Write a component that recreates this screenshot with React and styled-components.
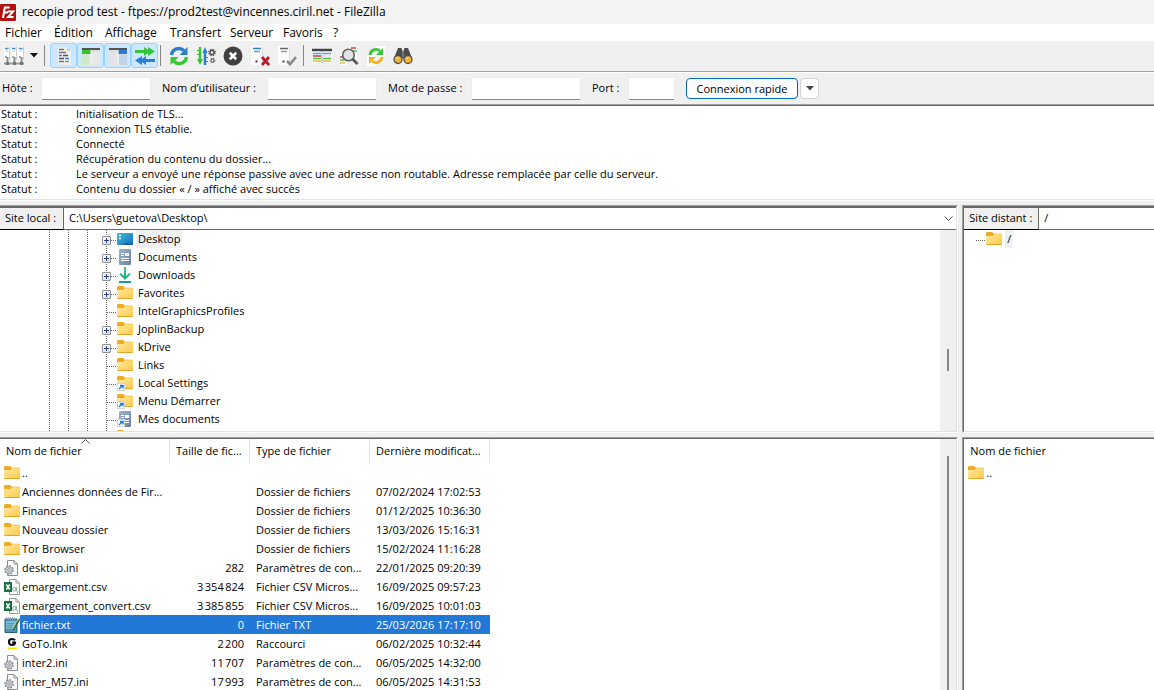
import React from 'react'
import styled, { createGlobalStyle, css } from 'styled-components'

const FACE = '#f0f0f0'
const SHADOW = '#a0a0a0'
const DARK = '#696969'
const LIGHT = '#e3e3e3'
const SELECTED = '#2178d6'

const GlobalStyle = createGlobalStyle`
  * {
    box-sizing: border-box;
  }
  body {
    margin: 0;
    overflow: hidden;
  }
  body, button, input, select {
    font-family: 'Open Sans', 'Noto Sans', sans-serif;
    font-size: 11px;
    color: #000;
  }
  svg {
    display: block;
    flex: none;
  }
`

const Window = styled('div')`
  display: flex;
  flex-direction: column;
  height: 100vh;
  background: ${FACE};
`

const TitleBar = styled('header')`
  display: flex;
  align-items: center;
  gap: 6px;
  height: 24px;
  flex: none;
  background: #f3f3f3;
`

const Title = styled('h1')`
  margin: 0;
  font-size: 12px;
  font-weight: normal;
  line-height: 16px;
  white-space: nowrap;
`

const MenuBar = styled('nav')`
  display: flex;
  height: 17px;
  flex: none;
  background: #fff;
`

const MenuButton = styled('button')`
  flex: none;
  width: ${({ $width }) => $width}px;
  padding: 0 0 0 5px;
  border: 0;
  background: none;
  font-size: 12px;
  line-height: 17px;
  text-align: left;
  white-space: nowrap;
`

const ToolBar = styled('div')`
  display: flex;
  align-items: center;
  height: 32px;
  flex: none;
  padding-bottom: 2px;
  border-bottom: 1px solid #fff;
  box-shadow: inset 0 -1px 0 ${SHADOW};
`

const ToolButton = styled('button')`
  display: flex;
  align-items: center;
  justify-content: center;
  flex: none;
  width: ${({ $narrow }) => ($narrow ? 14 : 27)}px;
  height: 25px;
  padding: 0;
  border: 1px solid transparent;
  border-radius: 3px;
  background: none;
  ${({ $pressed }) =>
    $pressed &&
    css`
      border-color: #99d1ff;
      background: #cce8ff;
    `}
`

const ToolSeparator = styled('span')`
  flex: none;
  width: 1px;
  height: 21px;
  margin: 0 ${({ $after }) => $after}px 0 ${({ $before }) => $before}px;
  background: #868686;
`

const QuickConnect = styled('form')`
  display: flex;
  align-items: center;
  gap: 11px;
  height: 31px;
  flex: none;
  padding-left: 2px;
`

const Field = styled('label')`
  display: flex;
  align-items: center;
  white-space: nowrap;
`

const FieldName = styled('span')`
  width: ${({ $width }) => $width}px;
  padding-bottom: 2px;
`

const FieldInput = styled('input')`
  width: ${({ $short }) => ($short ? 47 : 110)}px;
  height: 23px;
  padding: 0 4px;
  border: 1px solid #ececec;
  border-bottom-color: #868686;
  border-radius: 2px;
  background: #fff;
`

const ConnectGroup = styled('div')`
  display: flex;
  gap: 2px;
`

const ConnectButton = styled('button')`
  width: 112px;
  height: 21px;
  padding: 0;
  border: 1px solid #0067c0;
  border-radius: 4px;
  background: #fdfdfd;
  white-space: nowrap;
`

const HistoryButton = styled('button')`
  display: flex;
  align-items: center;
  justify-content: center;
  width: 19px;
  height: 21px;
  padding: 0;
  border: 1px solid #d0d0d0;
  border-radius: 4px;
  background: #fdfdfd;
`

const Log = styled('ul')`
  flex: none;
  margin: 0 0 4px;
  padding: 1px 0 4px;
  border-top: 1px solid ${SHADOW};
  border-bottom: 1px solid #fff;
  background: #fff;
  box-shadow: inset 0 1px 0 ${DARK}, inset 0 -1px 0 ${LIGHT};
  list-style: none;
`

const LogLine = styled('li')`
  display: flex;
  line-height: 15px;
  white-space: nowrap;
`

const LogKind = styled('span')`
  width: 76px;
  padding-left: 1px;
`

const Panes = styled('main')`
  display: grid;
  grid-template-columns: minmax(0, 5fr) minmax(0, 1fr);
  grid-template-rows: 228px minmax(0, 1fr);
  gap: 4px;
  flex: 1;
  min-height: 0;
`

const Pane = styled('section')`
  display: flex;
  flex-direction: column;
  min-width: 0;
  min-height: 0;
  overflow: hidden;
  border-top: 1px solid ${SHADOW};
  background: #fff;
  ${({ $remote }) =>
    $remote
      ? css`
          border-left: 1px solid ${SHADOW};
        `
      : css`
          border-right: 1px solid #fff;
        `}
  ${({ $open }) =>
    !$open &&
    css`
      border-bottom: 1px solid #fff;
    `}
`

const PaneInner = styled('div')`
  display: flex;
  flex-direction: column;
  flex: 1;
  min-height: 0;
  border-top: 1px solid ${DARK};
  ${({ $remote }) =>
    $remote
      ? css`
          border-left: 1px solid ${DARK};
        `
      : css`
          border-right: 1px solid ${LIGHT};
        `}
  ${({ $open }) =>
    !$open &&
    css`
      border-bottom: 1px solid ${LIGHT};
    `}
`

const PathBar = styled('div')`
  display: flex;
  height: 23px;
  flex: none;
  border-top: 1px solid ${DARK};
`

const PathLabel = styled('label')`
  flex: none;
  width: ${({ $width }) => $width}px;
  padding-left: 5px;
  border-right: 1px solid ${DARK};
  border-bottom: 1px solid #000;
  background: ${FACE};
  line-height: 20px;
  white-space: nowrap;
`

const PathBox = styled('div')`
  display: grid;
  grid-template-columns: minmax(0, 1fr) 12px;
  align-items: center;
  flex: 1;
  min-width: 0;
  border-bottom: 1px solid ${DARK};
`

const PathSelect = styled('select')`
  grid-area: 1 / 1 / 2 / 3;
  width: 100%;
  height: 20px;
  padding: 0 0 2px 5px;
  border: 0;
  appearance: none;
  background: none;
`

const PathChevron = styled('svg')`
  grid-area: 1 / 2;
  pointer-events: none;
`

const Scrollable = styled('div')`
  display: flex;
  flex: 1;
  min-height: 0;
`

const ScrollTrack = styled('div')`
  display: flex;
  justify-content: center;
  flex: none;
  width: 16px;
  padding-top: ${({ $top }) => $top}px;
  background: ${FACE};
`

const ScrollThumb = styled('div')`
  width: 2px;
  height: ${({ $height }) => $height};
  background: #868686;
`

const Tree = styled('ul')`
  flex: 1;
  min-width: 0;
  margin: 0;
  padding: 0 0 0 ${({ $indent }) => $indent}px;
  overflow: hidden;
  list-style: none;
`

const TreeRow = styled('li')`
  display: flex;
  align-items: center;
  height: 18px;
`

const Guide = styled('span')`
  flex: none;
  width: ${({ $last }) => ($last ? 15 : 19)}px;
  height: 18px;
  background: repeating-linear-gradient(${DARK} 0 1px, transparent 1px 2px) left / 1px 18px no-repeat;
`

const Branch = styled('span')`
  flex: none;
  width: 15px;
  height: 18px;
  padding-top: 6px;
  background: repeating-linear-gradient(90deg, ${DARK} 0 1px, transparent 1px 2px) 5px 10px / 10px 1px no-repeat
    ${({ $root }) =>
      !$root && `, repeating-linear-gradient(${DARK} 0 1px, transparent 1px 2px) 4px 0 / 1px 18px no-repeat`};
`

const Expander = styled('button')`
  display: block;
  width: 9px;
  height: 9px;
  padding: 0;
  border: 1px solid #919191;
  border-radius: 1px;
  background: linear-gradient(#27408b, #27408b) center / 5px 1px no-repeat,
    linear-gradient(#27408b, #27408b) center / 1px 5px no-repeat, linear-gradient(135deg, #fff, #dcdcdc);
`

const TreeName = styled('span')`
  margin-left: 3px;
  padding: 0 2px;
  line-height: 18px;
  white-space: nowrap;
  ${({ $current }) => $current && `background: ${FACE};`}
`

const ListArea = styled('div')`
  flex: 1;
  min-width: 0;
  overflow: hidden;
`

const FileTable = styled('table')`
  width: ${({ $width }) => $width};
  border-collapse: collapse;
  table-layout: fixed;
`

const HeadCell = styled('th')`
  position: relative;
  width: ${({ $width }) => ($width ? `${$width}px` : 'auto')};
  height: 24px;
  padding: 0 0 2px 6px;
  overflow: hidden;
  font-weight: normal;
  text-align: left;
  white-space: nowrap;
  ${({ $line }) => $line && `box-shadow: inset -1px 0 0 ${LIGHT};`}
`

const SortMark = styled('svg')`
  position: absolute;
  top: 0;
  left: 0;
  right: 0;
  margin: 0 auto;
`

const FileRow = styled('tr')`
  height: 19px;
  line-height: 19px;
  ${({ $selected }) => $selected && 'color: #fff;'}
`

const Cell = styled('td')`
  padding: 0 6px;
  overflow: hidden;
  text-align: ${({ $right }) => ($right ? 'right' : 'left')};
  white-space: nowrap;
  ${({ $selected }) => $selected && `background: ${SELECTED};`}
`

const NameCell = styled('td')`
  padding: 0 0 0 4px;
`

const NameLine = styled('div')`
  display: flex;
  align-items: center;
  height: 19px;
`

const FileName = styled('span')`
  flex: 1;
  padding-left: 2px;
  white-space: nowrap;
  ${({ $selected }) => $selected && `background: ${SELECTED};`}
`

const Defs = styled('svg')`
  position: absolute;
`

const Gradients = () => (
  <Defs width="0" height="0" aria-hidden="true">
    <linearGradient id="folder" x1="0" y1="0" x2="1" y2="1">
      <stop offset="0" stopColor="#ffe9a6" />
      <stop offset="1" stopColor="#fcc944" />
    </linearGradient>
    <linearGradient id="screen" x1="0" y1="0" x2="1" y2="1">
      <stop offset="0" stopColor="#3cc5e0" />
      <stop offset="1" stopColor="#1667b7" />
    </linearGradient>
    <linearGradient id="paper" x1="0" y1="0" x2="1" y2="1">
      <stop offset="0" stopColor="#a3b4cb" />
      <stop offset="1" stopColor="#6681a6" />
    </linearGradient>
    <linearGradient id="arrow" gradientUnits="userSpaceOnUse" x1="0" y1="0" x2="0" y2="16">
      <stop offset="0" stopColor="#3ccb86" />
      <stop offset="1" stopColor="#16a08c" />
    </linearGradient>
  </Defs>
)

const FolderShape = () => (
  <>
    <path d="M0 2.5Q0 1 1.2 1H6l2 1.8h7.2q.8 0 .8.8V6H0z" fill="#efac23" />
    <path d="M0 5h6.6l1.6-1.8H16V13q0 1-1 1H1q-1 0-1-1z" fill="url(#folder)" />
    <path d="M.5 13.5h15" stroke="#e2a52c" strokeWidth="1" />
  </>
)

const PaperShape = () => (
  <>
    <rect x="2" y="0" width="12" height="16" rx="1" fill="url(#paper)" />
    <path d="M4 4.5h3M4 6.5h3M4 9.5h8M4 11.5h8" stroke="#fff" />
    <rect x="8" y="4" width="4" height="3" fill="#fff" />
  </>
)

const LinkMark = () => (
  <>
    <rect x=".5" y="8.5" width="7" height="7" fill="#fff" stroke="#d2d2d2" />
    <path d="M2 14l3.5-3.5M3 10.5h3v3" fill="none" stroke="#1677c9" strokeWidth="1.3" />
  </>
)

const CogSheet = () => (
  <>
    <path d="M3.5.5H10L13.5 4v11.5h-10z" fill="#fafafa" stroke="#8c8c8c" />
    <path d="M10 .5V4h3.5" fill="none" stroke="#8c8c8c" />
    <circle cx="5" cy="10" r="4" fill="#d7dade" stroke="#8f969c" strokeWidth="1.8" strokeDasharray="1.7 1.4" />
    <circle cx="5" cy="10" r="3.3" fill="#d7dade" stroke="#8f969c" strokeWidth=".8" />
    <circle cx="5" cy="10" r="1.3" fill="#fff" stroke="#7c8389" strokeWidth=".8" />
  </>
)

const CsvSheet = () => (
  <>
    <path d="M5.5.5H12L15.5 4v11.5h-10z" fill="#fff" stroke="#8f9c94" />
    <path d="M12 .5V4h3.5" fill="none" stroke="#8f9c94" />
    <ellipse cx="10.3" cy="10.3" rx="1.7" ry="1.9" fill="none" stroke="#7fae92" />
    <path d="M12.3 8v4.5M14 12l-.6 2" stroke="#7fae92" />
    <rect x="0" y="3" width="8" height="10" fill="#1d7044" />
    <path d="M2.3 5.5l3.4 5M5.7 5.5l-3.4 5" stroke="#fff" strokeWidth="1.4" />
  </>
)

const NotePad = () => (
  <>
    <path d="M1 2h12v13.5H1z" fill="#4f93b4" stroke="#2b607d" />
    <path d="M2 4h10v8H2z" fill="#79bcd4" />
    <path d="M3 6.5h7M3 8.5h6M3 10.5h5M3 12.5h5" stroke="#4a90b0" strokeWidth=".8" />
    <path d="M2.5 0v3M4.5 0v3M6.5 0v3M8.5 0v3M10.5 0v3" stroke="#8fa9b5" strokeWidth=".8" />
    <path d="M15.5 1l-6 10-1 3 2.4-2L16 3z" fill="#3f6b2c" />
    <path d="M14.3 1.3L9 11" stroke="#b6d56c" strokeWidth=".8" />
  </>
)

const GotoMark = () => (
  <>
    <path d="M11 4.3Q9.8 3 8 3 5 3 5 6t3 3q3 0 3-2.5H8" fill="none" stroke="#111" strokeWidth="2.2" />
    <path d="M4 12.5h9" stroke="#f7e500" strokeWidth="2" />
  </>
)

const SHAPES = {
  folder: <FolderShape />,
  folderLink: (
    <>
      <FolderShape />
      <LinkMark />
    </>
  ),
  paper: <PaperShape />,
  paperLink: (
    <>
      <PaperShape />
      <LinkMark />
    </>
  ),
  desktop: (
    <>
      <rect x="0" y="2" width="16" height="12" rx=".8" fill="url(#screen)" />
      <path d="M2 4.5h2M2 7.5h2" stroke="#fff" strokeWidth="1.5" />
      <path d="M7 13h8" stroke="#0f3f74" strokeDasharray="4 1 1 1 1" />
    </>
  ),
  download: <path d="M8 0v11M3 6.5l5 5 5-5M2 15h12" fill="none" stroke="url(#arrow)" strokeWidth="2" />,
  ini: <CogSheet />,
  csv: <CsvSheet />,
  txt: <NotePad />,
  goto: <GotoMark />,
}

const Icon = ({ name }) => (
  <svg width="16" height="16" viewBox="0 0 16 16" aria-hidden="true">
    {SHAPES[name]}
  </svg>
)

const Logo = () => (
  <svg width="16" height="17" viewBox="0 0 16 17" aria-hidden="true">
    <rect width="16" height="17" rx="1" fill="#b01212" />
    <path d="M3 14L4.8 3.5h5M4 8.5h4" fill="none" stroke="#fff" strokeWidth="2" />
    <path d="M7.5 7.5h5.7L8 13h5.5" fill="none" stroke="#fff" strokeWidth="1.9" />
  </svg>
)

const ToolIcon = ({ children }) => (
  <svg width="20" height="20" viewBox="0 0 20 20" fill="none" aria-hidden="true">
    {children}
  </svg>
)

const Caret = ({ color = '#111' }) => (
  <svg width="8" height="5" viewBox="0 0 8 5" aria-hidden="true">
    <path d="M0 0h8L4 4.5z" fill={color} />
  </svg>
)

const SitesIcon = () => (
  <ToolIcon>
    <path d="M0 1h6v13H0zM7 1h6v13H7zM14 1h6v13h-6z" fill="#fff" />
    <path d="M5.5 1v13M12.5 1v13M19.5 1v13" stroke="#cfcfcf" />
    <path d="M1 2.5h3.5M8 2.5h3.5M15 2.5h3.5" stroke="#3a8ad8" strokeWidth="1.5" />
    <path d="M1.5 5H4M8.5 5H11M15.5 5H18" stroke="#9bc4e8" />
    <path d="M1 11h2M8 11h2M15 11h2" stroke="#555" />
    <path d="M3.5 11v6M10.5 11v6M17.5 11v6" stroke="#8b8b8b" strokeWidth="2" />
    <path d="M0 17.5h20" stroke="#9a9a9a" strokeWidth="2" />
    <path d="M2 17.5h3M9 17.5h3M16 17.5h3" stroke="#757575" strokeWidth="3" />
  </ToolIcon>
)

const LogIcon = () => (
  <ToolIcon>
    <path d="M4 1h9l4 4v14H4z" fill="#eee" />
    <path d="M13 1l4 4h-4z" fill="#cfcfcf" />
    <path d="M5 3.5h5M5 6.5h7M5 15.5h5" stroke="#777" strokeWidth="1.3" />
    <path d="M5 9.5h3M11 12.5h4" stroke="#3a80cc" strokeWidth="1.3" />
    <path d="M9 9.5h5M5 12.5h5" stroke="#555" strokeWidth="1.3" />
    <path d="M11 15.5h4" stroke="#43ad42" strokeWidth="1.3" />
  </ToolIcon>
)

const LocalTreeIcon = () => (
  <ToolIcon>
    <rect x="1" y="2" width="18" height="17" fill="#ddd" />
    <path d="M1 3h18" stroke="#555" strokeWidth="2" />
    <path d="M1 6h9" stroke="#2fc72f" strokeWidth="4" />
    <rect x="1" y="9" width="8" height="10" fill="#cdebc9" />
    <rect x="11" y="6" width="8" height="13" fill="#e8e8e8" />
    <path d="M10 4v15" stroke="#fff" />
  </ToolIcon>
)

const RemoteTreeIcon = () => (
  <ToolIcon>
    <rect x="1" y="2" width="18" height="17" fill="#ddd" />
    <path d="M1 3h18" stroke="#555" strokeWidth="2" />
    <path d="M10 6h9" stroke="#2a7bd5" strokeWidth="4" />
    <rect x="11" y="9" width="8" height="10" fill="#bcd3ea" />
    <rect x="1" y="6" width="8" height="13" fill="#e4e4e4" />
    <path d="M10 4v15" stroke="#fff" />
  </ToolIcon>
)

const QueueIcon = () => (
  <ToolIcon>
    <path d="M0 4h9V1l4 3V1l7 4.5-7 4.500V7l-4 3V7H0z" fill="#35c435" />
    <path d="M20 13h-9v-3l-4 3v-3l-7 4.500L7 19v-3l4 3v-3h9z" fill="#2b7fd3" />
  </ToolIcon>
)

const RefreshIcon = () => (
  <ToolIcon>
    <path d="M2.5 9A7.5 7.5 0 0 1 15 4.5" stroke="#2c7dcb" strokeWidth="3.5" />
    <path d="M18.5 1v8h-8z" fill="#2c7dcb" />
    <path d="M17.5 11A7.5 7.5 0 0 1 5 15.5" stroke="#36c936" strokeWidth="3.5" />
    <path d="M1.5 19v-8h8z" fill="#36c936" />
  </ToolIcon>
)

const ProcessIcon = () => (
  <ToolIcon>
    <path d="M4 1v14" stroke="#35c435" strokeWidth="2.5" />
    <path d="M1 13l3 6 3-6z" fill="#35c435" />
    <path d="M1 4.5h4M1 8.5h4" stroke="#35c435" />
    <path d="M9 4v15" stroke="#2b7fd3" strokeWidth="2.5" />
    <path d="M6.500 7L9 1l2.500 6z" fill="#2b7fd3" />
    <path d="M8 11.5h4M8 15.5h4" stroke="#2b7fd3" />
    <circle cx="16" cy="6.5" r="2.8" stroke="#555" strokeWidth="2" strokeDasharray="1.3 .9" />
    <circle cx="16" cy="6.5" r="2" stroke="#555" strokeWidth="1.3" />
    <circle cx="16.5" cy="14.5" r="2" stroke="#666" strokeWidth="1.6" strokeDasharray="1 .8" />
    <circle cx="16.5" cy="14.5" r="1.5" stroke="#666" />
  </ToolIcon>
)

const CancelIcon = () => (
  <ToolIcon>
    <circle cx="10" cy="10" r="9.5" fill="#404040" />
    <path d="M6.8 6.8l6.4 6.4M13.2 6.8l-6.4 6.4" stroke="#fff" strokeWidth="2.7" />
  </ToolIcon>
)

const ServerShape = ({ top, second }) => (
  <>
    <rect x="1" y="0" width="11" height="19" fill="#fbfbfb" />
    <path d="M12.5 1v18" stroke="#dadada" />
    <path d="M3 2.5h8" stroke={top} strokeWidth="1.5" />
    <path d="M4 5.5h6" stroke={second} strokeWidth="1.5" />
    <path d="M5.5 15.5h2" stroke="#444" strokeWidth="2" />
  </>
)

const DisconnectIcon = () => (
  <ToolIcon>
    <ServerShape top="#2b7fd3" second="#6b9fd4" />
    <path d="M12 11l7 8M19 11l-7 8" stroke="#b71c2b" strokeWidth="2.7" />
  </ToolIcon>
)

const ReconnectIcon = () => (
  <ToolIcon>
    <ServerShape top="#666" second="#999" />
    <path d="M10 15l3 3.2 6-7.2" stroke="#8a8a8a" strokeWidth="2.6" />
  </ToolIcon>
)

const FilterIcon = () => (
  <ToolIcon>
    <rect x="0" y="3" width="20" height="14" fill="#fff" />
    <path d="M0 4h20" stroke="#454545" strokeWidth="2.5" />
    <path d="M1 7.5h8M11 7.5h8" stroke="#5c9be0" strokeWidth="1.5" />
    <path d="M1 10h8" stroke="#b8374a" strokeWidth="1.5" />
    <path d="M1 12.5h8M11 12.5h8" stroke="#4cb83a" strokeWidth="1.5" />
    <path d="M1 15h8M11 15h8" stroke="#dcbf30" strokeWidth="1.5" />
    <path d="M11 10h8" stroke="#cfd4da" />
    <path d="M10 5v12" stroke="#8fa6bd" />
  </ToolIcon>
)

const CompareIcon = () => (
  <ToolIcon>
    <path d="M10 1h8v11h-8zM1 8h7v11H1z" fill="#fff" />
    <path d="M12 2h5M1 11h3" stroke="#c34343" strokeWidth="1.4" />
    <path d="M14 5h4M1 14h4" stroke="#55b848" strokeWidth="1.4" />
    <path d="M1 17h5" stroke="#ddc640" strokeWidth="1.4" />
    <circle cx="9.5" cy="9" r="5.8" fill="#dfe3e6" stroke="#636363" strokeWidth="1.6" />
    <path d="M13.5 13l5 5" stroke="#555" strokeWidth="2.6" />
  </ToolIcon>
)

const SyncIcon = () => (
  <ToolIcon>
    <path d="M10 0h9v11h-9zM1 9h8v11H1z" fill="#fff" />
    <path d="M4 9a6 6 0 0 1 10-4" stroke="#36c936" strokeWidth="2.8" />
    <path d="M17 2v7h-7z" fill="#36c936" />
    <path d="M16 11a6 6 0 0 1-10 4" stroke="#f3b221" strokeWidth="2.8" />
    <path d="M3 18v-7h7z" fill="#f3b221" />
  </ToolIcon>
)

const FindIcon = () => (
  <ToolIcon>
    <path d="M5 2h3.5l1 3h1l1-3H15l4 10-4 3-5-3-5 3-4-3z" fill="#4d4d4d" />
    <path d="M10 5v6" stroke="#777" strokeWidth="2" />
    <circle cx="5" cy="13.5" r="4" fill="#f6b22c" stroke="#4d4d4d" strokeWidth="1.3" />
    <circle cx="15" cy="13.5" r="4" fill="#f6b22c" stroke="#4d4d4d" strokeWidth="1.3" />
    <path d="M3.5 13q.4-1.700 2-1.700M13.500 13q.4-1.700 2-1.700" stroke="#ffe39a" />
  </ToolIcon>
)

const menus = [
  ['Fichier', 49],
  ['Édition', 51],
  ['Affichage', 65],
  ['Transfert', 60],
  ['Serveur', 53],
  ['Favoris', 50],
  ['?', 20],
]

const viewTools = [
  ['Journal des messages', LogIcon],
  ['Arborescence locale', LocalTreeIcon],
  ['Arborescence distante', RemoteTreeIcon],
  ["File d'attente", QueueIcon],
]

const actionTools = [
  ['Actualiser', RefreshIcon],
  ['Traiter la file', ProcessIcon],
  ['Annuler', CancelIcon],
  ['Déconnecter', DisconnectIcon],
  ['Reconnecter', ReconnectIcon],
]

const listTools = [
  ['Filtres', FilterIcon],
  ['Comparer', CompareIcon],
  ['Navigation synchronisée', SyncIcon],
  ['Rechercher', FindIcon],
]

const messages = [
  'Initialisation de TLS...',
  'Connexion TLS établie.',
  'Connecté',
  'Récupération du contenu du dossier...',
  'Le serveur a envoyé une réponse passive avec une adresse non routable. Adresse remplacée par celle du serveur.',
  'Contenu du dossier « / » affiché avec succès',
]

const folders = [
  { name: 'Desktop', icon: 'desktop', expandable: true, current: true },
  { name: 'Documents', icon: 'paper', expandable: true },
  { name: 'Downloads', icon: 'download', expandable: true },
  { name: 'Favorites', icon: 'folder', expandable: true },
  { name: 'IntelGraphicsProfiles', icon: 'folder' },
  { name: 'JoplinBackup', icon: 'folder', expandable: true },
  { name: 'kDrive', icon: 'folder', expandable: true },
  { name: 'Links', icon: 'folder' },
  { name: 'Local Settings', icon: 'folderLink' },
  { name: 'Menu Démarrer', icon: 'folderLink' },
  { name: 'Mes documents', icon: 'paperLink' },
  { name: '', icon: 'folder' },
]

const files = [
  { name: '..', icon: 'folder' },
  { name: 'Anciennes données de Fir...', icon: 'folder', type: 'Dossier de fichiers', date: '07/02/2024 17:02:53' },
  { name: 'Finances', icon: 'folder', type: 'Dossier de fichiers', date: '01/12/2025 10:36:30' },
  { name: 'Nouveau dossier', icon: 'folder', type: 'Dossier de fichiers', date: '13/03/2026 15:16:31' },
  { name: 'Tor Browser', icon: 'folder', type: 'Dossier de fichiers', date: '15/02/2024 11:16:28' },
  { name: 'desktop.ini', icon: 'ini', size: '282', type: 'Paramètres de con...', date: '22/01/2025 09:20:39' },
  { name: 'emargement.csv', icon: 'csv', size: '3\u202f354\u202f824', type: 'Fichier CSV Micros...', date: '16/09/2025 09:57:23' },
  { name: 'emargement_convert.csv', icon: 'csv', size: '3\u202f385\u202f855', type: 'Fichier CSV Micros...', date: '16/09/2025 10:01:03' },
  { name: 'fichier.txt', icon: 'txt', size: '0', type: 'Fichier TXT', date: '25/03/2026 17:17:10', selected: true },
  { name: 'GoTo.lnk', icon: 'goto', size: '2\u202f200', type: 'Raccourci', date: '06/02/2025 10:32:44' },
  { name: 'inter2.ini', icon: 'ini', size: '11\u202f707', type: 'Paramètres de con...', date: '06/05/2025 14:32:00' },
  { name: 'inter_M57.ini', icon: 'ini', size: '17\u202f993', type: 'Paramètres de con...', date: '06/05/2025 14:31:53' },
]

const Tools = ({ items, pressed }) =>
  items.map(([label, Drawing]) => (
    <ToolButton key={label} type="button" aria-label={label} aria-pressed={pressed} $pressed={pressed}>
      <Drawing />
    </ToolButton>
  ))

const QuickField = ({ id, label, width, short, type = 'text' }) => (
  <Field htmlFor={id}>
    <FieldName $width={width}>{label}</FieldName>
    <FieldInput id={id} type={type} $short={short} />
  </Field>
)

const LocalTree = () => (
  <Tree $indent={49}>
    {folders.map(({ name, icon, expandable, current }) => (
      <TreeRow key={name}>
        <Guide />
        <Guide />
        <Guide $last />
        <Branch>{expandable && <Expander type="button" aria-label={`Développer ${name}`} />}</Branch>
        <Icon name={icon} />
        <TreeName $current={current}>{name}</TreeName>
      </TreeRow>
    ))}
  </Tree>
)

const LocalFiles = () => (
  <FileTable $width="490px">
    <thead>
      <tr>
        <HeadCell $width={170} $line>
          Nom de fichier
          <SortMark width="9" height="5" viewBox="0 0 9 5" aria-hidden="true">
            <path d="M.5 4.5l4-4 4 4" fill="none" stroke="#555" />
          </SortMark>
        </HeadCell>
        <HeadCell $width={80} $line>
          Taille de fic...
        </HeadCell>
        <HeadCell $width={120} $line>
          Type de fichier
        </HeadCell>
        <HeadCell $width={120} $line>
          Dernière modificat...
        </HeadCell>
      </tr>
    </thead>
    <tbody>
      {files.map(({ name, icon, size, type, date, selected }) => (
        <FileRow key={name} $selected={selected}>
          <NameCell>
            <NameLine>
              <Icon name={icon} />
              <FileName $selected={selected}>{name}</FileName>
            </NameLine>
          </NameCell>
          <Cell $right $selected={selected}>
            {size}
          </Cell>
          <Cell $selected={selected}>{type}</Cell>
          <Cell $selected={selected}>{date}</Cell>
        </FileRow>
      ))}
    </tbody>
  </FileTable>
)

const App = () => (
  <Window>
    <GlobalStyle />
    <Gradients />
    <TitleBar>
      <Logo />
      <Title>recopie prod test - ftpes://prod2test@vincennes.ciril.net - FileZilla</Title>
    </TitleBar>
    <MenuBar>
      {menus.map(([label, width]) => (
        <MenuButton key={label} type="button" $width={width}>
          {label}
        </MenuButton>
      ))}
    </MenuBar>
    <ToolBar>
      <ToolButton type="button" aria-label="Gestionnaire de sites">
        <SitesIcon />
      </ToolButton>
      <ToolButton type="button" aria-label="Liste des sites" $narrow>
        <Caret />
      </ToolButton>
      <ToolSeparator $before={3} $after={5} />
      <Tools items={viewTools} pressed />
      <ToolSeparator $before={2} $after={4} />
      <Tools items={actionTools} />
      <ToolSeparator $before={3} $after={4} />
      <Tools items={listTools} />
    </ToolBar>
    <QuickConnect onSubmit={e => e.preventDefault()}>
      <QuickField id="host" label="Hôte :" width={39} />
      <QuickField id="user" label="Nom d’utilisateur :" width={105} />
      <QuickField id="password" label="Mot de passe :" width={83} type="password" />
      <QuickField id="port" label="Port :" width={36} short />
      <ConnectGroup>
        <ConnectButton type="submit">Connexion rapide</ConnectButton>
        <HistoryButton type="button" aria-label="Historique">
          <Caret color="#444" />
        </HistoryButton>
      </ConnectGroup>
    </QuickConnect>
    <Log>
      {messages.map(message => (
        <LogLine key={message}>
          <LogKind>Statut :</LogKind>
          <span>{message}</span>
        </LogLine>
      ))}
    </Log>
    <Panes>
      <Pane>
        <PaneInner>
          <PathBar>
            <PathLabel htmlFor="local-path" $width={64}>
              Site local :
            </PathLabel>
            <PathBox>
              <PathSelect id="local-path">
                <option>C:\Users\guetova\Desktop\</option>
              </PathSelect>
              <PathChevron width="9" height="6" viewBox="0 0 9 6" aria-hidden="true">
                <path d="M.5 .5l4 4 4-4" fill="none" stroke="#555" />
              </PathChevron>
            </PathBox>
          </PathBar>
          <Scrollable>
            <LocalTree />
            <ScrollTrack $top={119}>
              <ScrollThumb $height="22px" />
            </ScrollTrack>
          </Scrollable>
        </PaneInner>
      </Pane>
      <Pane $remote>
        <PaneInner $remote>
          <PathBar>
            <PathLabel htmlFor="remote-path" $width={75}>
              Site distant :
            </PathLabel>
            <PathBox>
              <PathSelect id="remote-path">
                <option>/</option>
              </PathSelect>
            </PathBox>
          </PathBar>
          <Tree $indent={7}>
            <TreeRow>
              <Branch $root />
              <Icon name="folder" />
              <TreeName $current>/</TreeName>
            </TreeRow>
          </Tree>
        </PaneInner>
      </Pane>
      <Pane $open>
        <PaneInner $open>
          <Scrollable>
            <ListArea>
              <LocalFiles />
            </ListArea>
            <ScrollTrack $top={17}>
              <ScrollThumb $height="100%" />
            </ScrollTrack>
          </Scrollable>
        </PaneInner>
      </Pane>
      <Pane $remote $open>
        <PaneInner $remote $open>
          <FileTable $width="100%">
            <thead>
              <tr>
                <HeadCell>Nom de fichier</HeadCell>
              </tr>
            </thead>
            <tbody>
              <FileRow>
                <NameCell>
                  <NameLine>
                    <Icon name="folder" />
                    <FileName>..</FileName>
                  </NameLine>
                </NameCell>
              </FileRow>
            </tbody>
          </FileTable>
        </PaneInner>
      </Pane>
    </Panes>
  </Window>
)

export default App
